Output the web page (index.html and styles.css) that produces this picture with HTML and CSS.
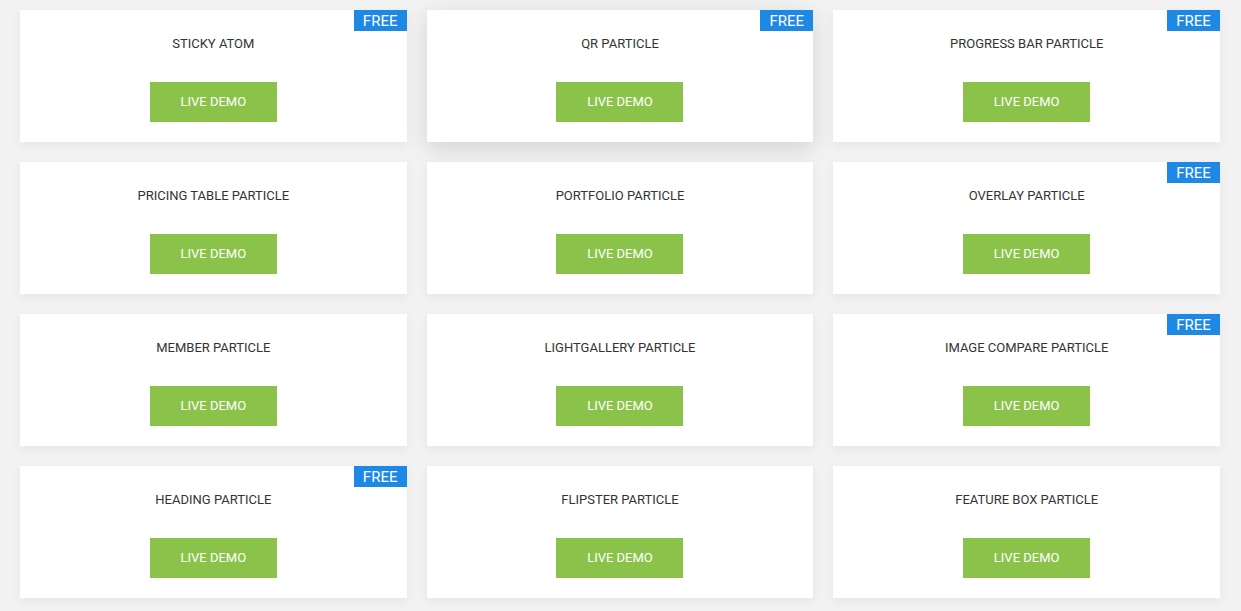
FILE: index.html
```html
<!DOCTYPE html>
<html lang="en">

<head>
    <meta charset="UTF-8">
    <meta name="viewport" content="width=device-width, initial-scale=1.0">
    <title>Particles</title>
    <link rel="stylesheet" href="styles.css">
</head>

<body>
    <div class="particle-grid">
        <div class="particle-card">
            <span class="free-badge">FREE</span>
            <div class="particle-title">STICKY ATOM</div>
            <a class="demo-button" href="#">LIVE DEMO</a>
        </div>
        <div class="particle-card hovered">
            <span class="free-badge">FREE</span>
            <div class="particle-title">QR PARTICLE</div>
            <a class="demo-button" href="#">LIVE DEMO</a>
        </div>
        <div class="particle-card">
            <span class="free-badge">FREE</span>
            <div class="particle-title">PROGRESS BAR PARTICLE</div>
            <a class="demo-button" href="#">LIVE DEMO</a>
        </div>

        <div class="particle-card">
            <div class="particle-title">PRICING TABLE PARTICLE</div>
            <a class="demo-button" href="#">LIVE DEMO</a>
        </div>
        <div class="particle-card">
            <div class="particle-title">PORTFOLIO PARTICLE</div>
            <a class="demo-button" href="#">LIVE DEMO</a>
        </div>
        <div class="particle-card">
            <span class="free-badge">FREE</span>
            <div class="particle-title">OVERLAY PARTICLE</div>
            <a class="demo-button" href="#">LIVE DEMO</a>
        </div>

        <div class="particle-card">
            <div class="particle-title">MEMBER PARTICLE</div>
            <a class="demo-button" href="#">LIVE DEMO</a>
        </div>
        <div class="particle-card">
            <div class="particle-title">LIGHTGALLERY PARTICLE</div>
            <a class="demo-button" href="#">LIVE DEMO</a>
        </div>
        <div class="particle-card">
            <span class="free-badge">FREE</span>
            <div class="particle-title">IMAGE COMPARE PARTICLE</div>
            <a class="demo-button" href="#">LIVE DEMO</a>
        </div>

        <div class="particle-card">
            <span class="free-badge">FREE</span>
            <div class="particle-title">HEADING PARTICLE</div>
            <a class="demo-button" href="#">LIVE DEMO</a>
        </div>
        <div class="particle-card">
            <div class="particle-title">FLIPSTER PARTICLE</div>
            <a class="demo-button" href="#">LIVE DEMO</a>
        </div>
        <div class="particle-card">
            <div class="particle-title">FEATURE BOX PARTICLE</div>
            <a class="demo-button" href="#">LIVE DEMO</a>
        </div>
    </div>
</body>

</html>
```

FILE: styles.css
```css
* {
    margin: 0;
    padding: 0;
    box-sizing: border-box;
}

body {
    background: #f2f2f2;
    color: #333;
    font-family: Roboto, 'Liberation Sans', sans-serif;
    overflow: hidden;
}

.particle-grid {
    display: grid;
    grid-template-columns: repeat(3, 1fr);
    grid-auto-rows: 132px;
    column-gap: 20px;
    row-gap: 20px;
    padding: 10px 21px 10px 20px;
}

.particle-card {
    position: relative;
    background: #fff;
    display: flex;
    flex-direction: column;
    align-items: center;
    padding-top: 24px;
    box-shadow: 0 3px 10px rgba(0, 0, 0, 0.06);
}

.particle-card.hovered {
    box-shadow: 0 6px 22px rgba(0, 0, 0, 0.13);
}

.particle-title {
    font-size: 13px;
    line-height: 20px;
    color: #333;
    margin-bottom: 28px;
}

.demo-button {
    display: flex;
    align-items: center;
    justify-content: center;
    width: 127px;
    height: 40px;
    padding-bottom: 2px;
    background: #8bc34a;
    color: #fff;
    font-size: 13px;
    text-decoration: none;
}

.free-badge {
    position: absolute;
    top: 0;
    right: 0;
    width: 53px;
    height: 21px;
    padding-top: 1px;
    background: #1e88e5;
    color: #fff;
    font-size: 15px;
    line-height: 20px;
    text-align: center;
}
```
